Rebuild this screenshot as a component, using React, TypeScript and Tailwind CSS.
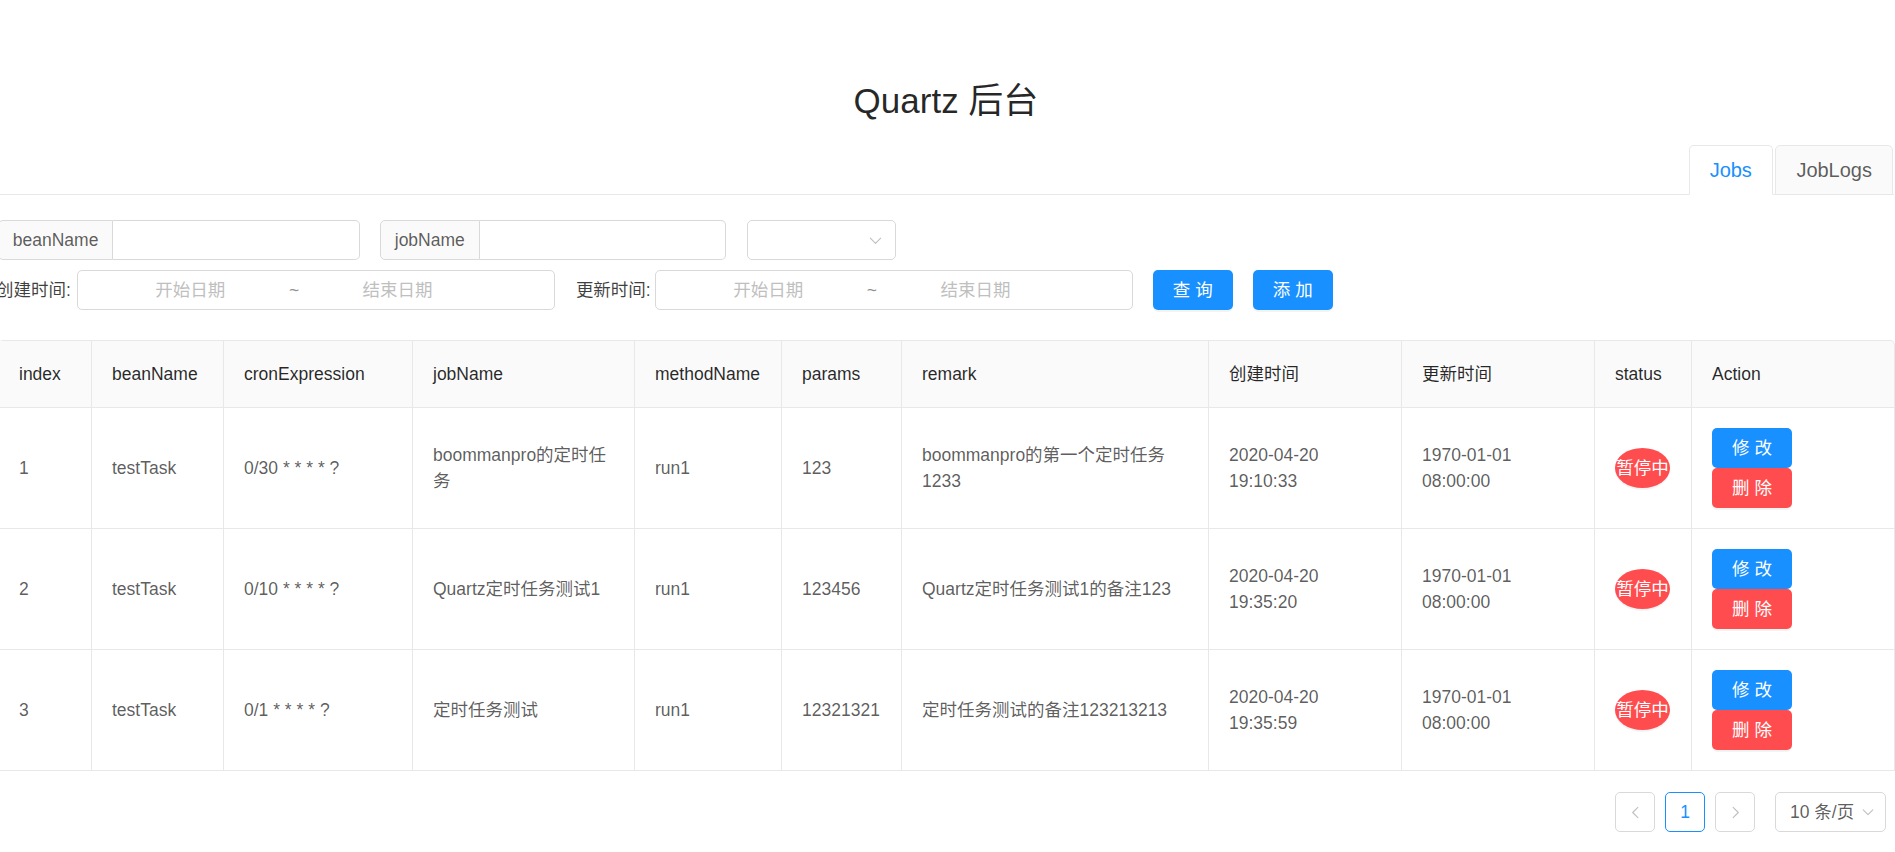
import React from "react";

const FONT = { fontFamily: '"Liberation Sans", Arial, "Noto Sans CJK SC", sans-serif' };

function ChevronDown({ className }: { className?: string }) {
  return (
    <svg viewBox="0 0 16 16" className={className} fill="none" stroke="currentColor" strokeWidth="1.2">
      <path d="M2.5 5.5 L8 11 L13.5 5.5" strokeLinecap="round" strokeLinejoin="round" />
    </svg>
  );
}

function ChevronSide({ dir }: { dir: "l" | "r" }) {
  return (
    <svg viewBox="0 0 16 16" className="w-[15px] h-[15px]" fill="none" stroke="currentColor" strokeWidth="1.2">
      {dir === "l" ? (
        <path d="M10.5 2.5 L5 8 L10.5 13.5" strokeLinecap="round" strokeLinejoin="round" />
      ) : (
        <path d="M5.5 2.5 L11 8 L5.5 13.5" strokeLinecap="round" strokeLinejoin="round" />
      )}
    </svg>
  );
}

function RangePicker() {
  return (
    <div className="flex items-center w-[478px] h-[40px] border border-[#d9d9d9] rounded-[5px] px-[13.75px] shrink-0">
      <span className="w-[44%] text-center text-[#bfbfbf]">开始日期</span>
      <span className="w-[10px] text-center text-[rgba(0,0,0,0.45)]">~</span>
      <span className="w-[44%] text-center text-[#bfbfbf]">结束日期</span>
    </div>
  );
}

const cols = [93, 132, 189, 222, 147, 120, 307, 193, 193, 97, 203];
const headers = [
  "index",
  "beanName",
  "cronExpression",
  "jobName",
  "methodName",
  "params",
  "remark",
  "创建时间",
  "更新时间",
  "status",
  "Action",
];

const rows = [
  {
    index: "1",
    bean: "testTask",
    cron: "0/30 * * * * ?",
    job: "boommanpro的定时任务",
    method: "run1",
    params: "123",
    remark: "boommanpro的第一个定时任务1233",
    created: "2020-04-20 19:10:33",
    updated: "1970-01-01 08:00:00",
  },
  {
    index: "2",
    bean: "testTask",
    cron: "0/10 * * * * ?",
    job: "Quartz定时任务测试1",
    method: "run1",
    params: "123456",
    remark: "Quartz定时任务测试1的备注123",
    created: "2020-04-20 19:35:20",
    updated: "1970-01-01 08:00:00",
  },
  {
    index: "3",
    bean: "testTask",
    cron: "0/1 * * * * ?",
    job: "定时任务测试",
    method: "run1",
    params: "12321321",
    remark: "定时任务测试的备注123213213",
    created: "2020-04-20 19:35:59",
    updated: "1970-01-01 08:00:00",
  },
];

export default function App() {
  return (
    <div className="min-h-screen bg-white overflow-hidden text-[17.5px] leading-[1.5] text-[rgba(0,0,0,0.65)]" style={FONT}>
      <div className="ml-[-2px] w-[1896px] pt-[80px]">
        <h1 className="h-[42px] text-center text-[35px] leading-[42px] text-[rgba(0,0,0,0.85)]">Quartz 后台</h1>

        {/* Tabs */}
        <div className="mt-[23px] flex justify-end items-start h-[50px] border-b border-[#e8e8e8] pr-[1px]">
          <div className="h-[50px] px-[20px] flex items-center text-[20px] text-[#1890ff] bg-white border border-[#e8e8e8] border-b-white rounded-t-[5px]">
            Jobs
          </div>
          <div className="ml-[2.5px] h-[50px] px-[20px] flex items-center text-[20px] text-[rgba(0,0,0,0.65)] bg-[#fafafa] border border-[#e8e8e8] rounded-t-[5px]">
            JobLogs
          </div>
        </div>

        {/* Form */}
        <div className="mt-[25px] flex items-center h-[40px]">
          <div className="flex w-[362px] h-[40px] shrink-0">
            <div className="px-[13.75px] flex items-center bg-[#fafafa] border border-[#d9d9d9] rounded-l-[5px]">beanName</div>
            <div className="flex-1 border border-l-0 border-[#d9d9d9] rounded-r-[5px]" />
          </div>
          <div className="ml-[20px] flex w-[346px] h-[40px] shrink-0">
            <div className="px-[13.75px] flex items-center bg-[#fafafa] border border-[#d9d9d9] rounded-l-[5px]">jobName</div>
            <div className="flex-1 border border-l-0 border-[#d9d9d9] rounded-r-[5px]" />
          </div>
          <div className="ml-[21px] w-[149px] h-[40px] border border-[#d9d9d9] rounded-[5px] flex items-center justify-end pr-[12px] text-[#bfbfbf]">
            <ChevronDown className="w-[15px] h-[15px]" />
          </div>
        </div>

        <div className="mt-[10px] flex items-center h-[40px]">
          <span className="ml-[-2px] mr-[6px] text-[rgba(0,0,0,0.75)]">创建时间:</span>
          <RangePicker />
          <span className="ml-[21px] mr-[4px] text-[rgba(0,0,0,0.75)]">更新时间:</span>
          <RangePicker />
          <button className="ml-[20px] w-[80px] h-[40px] rounded-[5px] bg-[#1890ff] text-white shadow-[0_2px_0_rgba(0,0,0,0.045)]">查 询</button>
          <button className="ml-[20px] w-[80px] h-[40px] rounded-[5px] bg-[#1890ff] text-white shadow-[0_2px_0_rgba(0,0,0,0.045)]">添 加</button>
        </div>

        {/* Table */}
        <table className="mt-[30px] w-[1896px] table-fixed border-separate border-spacing-0 border-t border-l border-[#e8e8e8] rounded-t-[5px]">
          <colgroup>
            {cols.map((w, i) => (
              <col key={i} style={{ width: w }} />
            ))}
          </colgroup>
          <thead>
            <tr>
              {headers.map((h, i) => (
                <th
                  key={h}
                  className={`h-[67px] px-[20px] text-left font-normal bg-[#fafafa] text-[rgba(0,0,0,0.85)] border-r border-b border-[#e8e8e8] ${i === headers.length - 1 ? "rounded-tr-[5px]" : ""}`}
                >
                  {h}
                </th>
              ))}
            </tr>
          </thead>
          <tbody>
            {rows.map((r) => (
              <tr key={r.index}>
                <td className="px-[20px] border-r border-b border-[#e8e8e8]">{r.index}</td>
                <td className="px-[20px] border-r border-b border-[#e8e8e8]">{r.bean}</td>
                <td className="px-[20px] border-r border-b border-[#e8e8e8]">{r.cron}</td>
                <td className="pl-[20px] pr-[16px] border-r border-b border-[#e8e8e8]">{r.job}</td>
                <td className="px-[20px] border-r border-b border-[#e8e8e8]">{r.method}</td>
                <td className="pl-[20px] pr-[16px] border-r border-b border-[#e8e8e8]">{r.params}</td>
                <td className="px-[20px] border-r border-b border-[#e8e8e8]">{r.remark}</td>
                <td className="px-[20px] border-r border-b border-[#e8e8e8]">{r.created}</td>
                <td className="px-[20px] border-r border-b border-[#e8e8e8]">{r.updated}</td>
                <td className="px-[20px] border-r border-b border-[#e8e8e8]">
                  <div className="w-[55px] h-[40px] rounded-[50%] bg-[#ff4d4f] text-white flex items-center justify-center whitespace-nowrap shadow-[0_2px_0_rgba(0,0,0,0.045)]">
                    暂停中
                  </div>
                </td>
                <td className="px-[20px] py-[20px] border-r border-b border-[#e8e8e8]">
                  <div className="flex flex-col items-start">
                    <button className="w-[80px] h-[40px] rounded-[5px] bg-[#1890ff] text-white">修 改</button>
                    <button className="w-[80px] h-[40px] rounded-[5px] bg-[#ff4d4f] text-white shadow-[0_2px_0_rgba(0,0,0,0.045)]">删 除</button>
                  </div>
                </td>
              </tr>
            ))}
          </tbody>
        </table>

        {/* Pagination */}
        <div className="mt-[21px] flex justify-end items-center pr-[8px]">
          <div className="w-[40px] h-[40px] border border-[#d9d9d9] rounded-[5px] flex items-center justify-center text-[#bfbfbf]">
            <ChevronSide dir="l" />
          </div>
          <div className="ml-[10px] w-[40px] h-[40px] border border-[#1890ff] rounded-[5px] flex items-center justify-center text-[#1890ff]">
            1
          </div>
          <div className="ml-[10px] w-[40px] h-[40px] border border-[#d9d9d9] rounded-[5px] flex items-center justify-center text-[#bfbfbf]">
            <ChevronSide dir="r" />
          </div>
          <div className="ml-[20px] w-[111px] h-[40px] border border-[#d9d9d9] rounded-[5px] flex items-center pl-[14px] pr-[10px]">
            <span className="flex-1">10 条/页</span>
            <span className="text-[#bfbfbf]">
              <ChevronDown className="w-[14px] h-[14px]" />
            </span>
          </div>
        </div>
      </div>
    </div>
  );
}
